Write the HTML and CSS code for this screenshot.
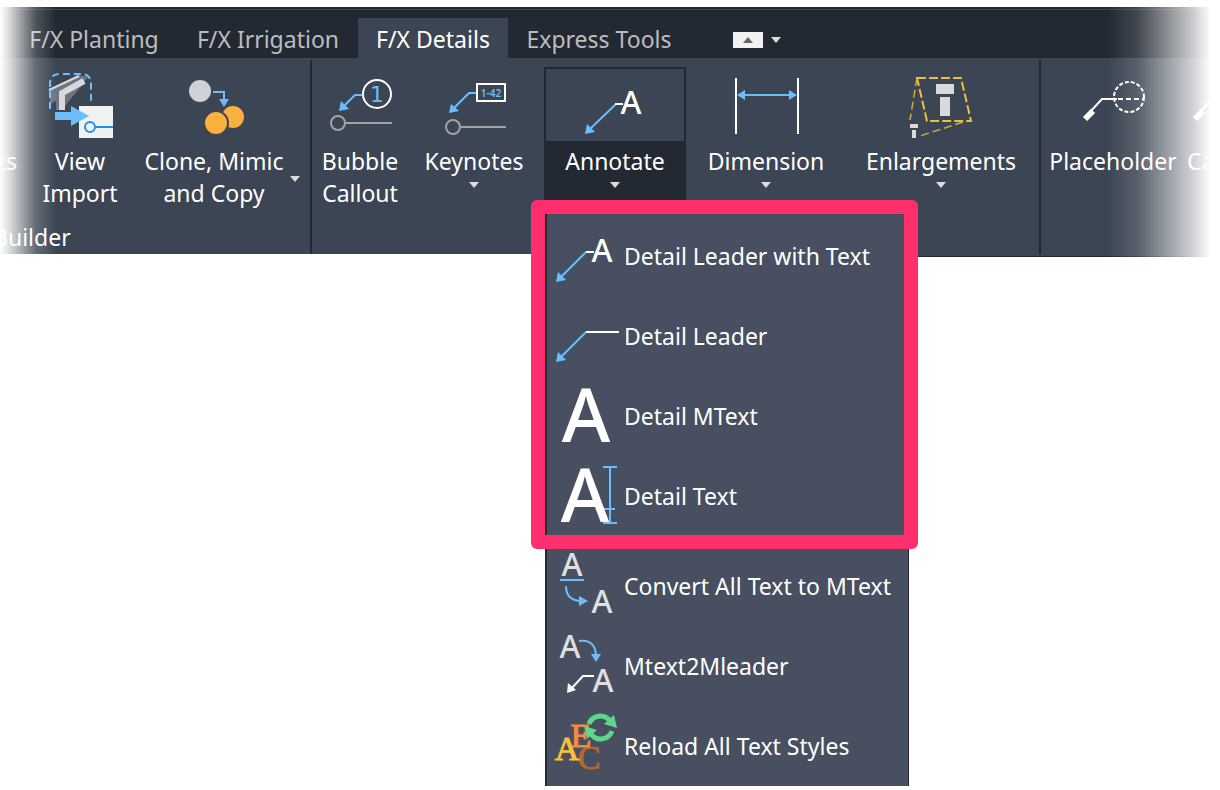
FILE: index.html
```html
<!DOCTYPE html>
<html lang="en">
<head>
  <meta charset="UTF-8" />
  <meta name="viewport" content="width=device-width, initial-scale=1" />
  <title>F/X Details</title>
  <link rel="stylesheet" href="styles.css">
</head>
<body>

  <header class="ribbon">
    <nav class="tabs">
      <a href="#planting" class="tab tab-planting">F/X Planting</a>
      <a href="#irrigation" class="tab tab-irrigation">F/X Irrigation</a>
      <a href="#details" class="tab tab-details active">F/X Details</a>
      <a href="#express" class="tab tab-express">Express Tools</a>
      <button class="minimize" aria-label="Minimize ribbon">
        <svg width="10" height="6"><path d="M0 6 L5 0 L10 6 Z" fill="#666" /></svg>
      </button>
      <button class="minimize-more" aria-label="Minimize options">
        <svg width="10" height="6"><path d="M0 0 H10 L5 6 Z" fill="#dcdcdc" /></svg>
      </button>
    </nav>

    <div class="panels">
      <!-- Builder -->
      <section class="panel panel-builder">
        <div class="tools">
          <button class="tool tool-cut"><span class="icon"></span><span class="label">cs</span></button>
          <button class="tool tool-view">
            <span class="icon">
              <svg width="64" height="64">
                <path d="M2 17 L30 3 L40 5 L14 38 H8 L2 32 Z" fill="#6d7584" />
                <path d="M2 32 L8 29 V38 H5 Z" fill="#3c4553" />
                <path d="M1 18 L31 4" stroke="#d9d9d9" stroke-width="2" />
                <path d="M36 9 L14 21 V38" stroke="#d9d9d9" stroke-width="6" fill="none" />
                <path d="M2 37 V12 Q2 2 12 2 H33 Q43 2 43 12 V30" stroke="#6cbdfb" stroke-width="2" stroke-dasharray="7 4" fill="none" />
                <rect x="31" y="34" width="34" height="32" fill="#f0f2f2" />
                <path d="M7 40 H23 V34 L41 44 L23 54 V48 H7 Z" fill="#6cbdfb" />
                <circle cx="42" cy="55" r="5" fill="#f0f2f2" stroke="#1e90ea" stroke-width="2" />
                <path d="M48 55 H65" stroke="#1e90ea" stroke-width="2" />
              </svg>
            </span>
            <span class="label">View<br>Import</span>
          </button>
          <button class="tool tool-clone">
            <span class="icon">
              <svg width="64" height="64">
                <circle cx="18" cy="19" r="11" fill="#cfd1d4" />
                <path d="M31 20 H42 V28" stroke="#6cbdfb" stroke-width="2" fill="none" />
                <path d="M37 27 H47 L42 35 Z" fill="#6cbdfb" />
                <circle cx="51" cy="45" r="11" fill="#fbb040" />
                <circle cx="34" cy="51" r="12" fill="#fbb040" stroke="#3c4553" stroke-width="2" />
              </svg>
            </span>
            <span class="label">Clone, Mimic<br>and Copy</span>
            <svg class="side-arrow" width="10" height="6"><path d="M0 0 H10 L5 6 Z" fill="#dcdcdc" /></svg>
          </button>
        </div>
        <h2 class="panel-title">Builder</h2>
      </section>

      <!-- Details, callouts -->
      <section class="panel">
        <div class="tools">
          <div class="separator"></div>
          <button class="tool tool-bubble">
            <span class="icon">
              <svg width="64" height="64">
                <path d="M34 23 H27 L15 35" stroke="#6cbdfb" stroke-width="2" fill="none" />
                <path d="M11 39 L13 29 L21 37 Z" fill="#6cbdfb" />
                <circle cx="49" cy="22" r="14" stroke="#fff" stroke-width="2" fill="none" />
                <text x="49" y="30" class="bubble-number">1</text>
                <circle cx="10" cy="51" r="7" stroke="#a3a3a3" stroke-width="2" fill="none" />
                <path d="M18 51 H64" stroke="#a3a3a3" stroke-width="2" />
              </svg>
            </span>
            <span class="label">Bubble<br>Callout</span>
          </button>
          <button class="tool tool-keynotes">
            <span class="icon">
              <svg width="64" height="64">
                <path d="M34 21 H27 L12 36" stroke="#6cbdfb" stroke-width="2" fill="none" />
                <path d="M7 41 L9 32 L17 39 Z" fill="#6cbdfb" />
                <rect x="35" y="12" width="28" height="17" stroke="#fff" stroke-width="2" fill="none" />
                <text x="49" y="25" class="key-number">1-42</text>
                <circle cx="11" cy="55" r="7" stroke="#a3a3a3" stroke-width="2" fill="none" />
                <path d="M19 55 H64" stroke="#a3a3a3" stroke-width="2" />
              </svg>
            </span>
            <span class="label">Keynotes</span>
            <svg class="arrow" width="10" height="6"><path d="M0 0 H10 L5 6 Z" fill="#dcdcdc" /></svg>
          </button>

          <div class="dropdown">
            <button class="tool tool-annotate open" id="annotateBtn" aria-expanded="true">
              <span class="icon">
                <svg width="64" height="64">
                  <path d="M7 57 L33 32" stroke="#6cbdfb" stroke-width="2" />
                  <path d="M2 62 L4 52 L12 60 Z" fill="#6cbdfb" />
                  <path d="M32 32 H40" stroke="#fff" stroke-width="2" />
                  <text x="48" y="42" class="glyph">A</text>
                </svg>
              </span>
              <span class="label">Annotate</span>
              <svg class="arrow" width="10" height="6"><path d="M0 0 H10 L5 6 Z" fill="#dcdcdc" /></svg>
            </button>

            <!-- Annotate menu -->
            <div class="menu" id="annotateMenu">
              <div class="menu-group highlighted">
                <button class="menu-item">
                  <svg width="64" height="72">
                    <path d="M7 57 L32 32" stroke="#6cbdfb" stroke-width="2" />
                    <path d="M2 62 L4 52 L12 60 Z" fill="#6cbdfb" />
                    <path d="M32 32 H40" stroke="#fff" stroke-width="2" />
                    <text x="48" y="42" class="glyph">A</text>
                  </svg>
                  Detail Leader with Text
                </button>
                <button class="menu-item">
                  <svg width="64" height="72">
                    <path d="M7 57 L32 32" stroke="#6cbdfb" stroke-width="2" />
                    <path d="M2 62 L4 52 L12 60 Z" fill="#6cbdfb" />
                    <path d="M32 32 H65" stroke="#fff" stroke-width="2" />
                  </svg>
                  Detail Leader
                </button>
                <button class="menu-item">
                  <svg width="64" height="72">
                    <text x="32" y="62" class="glyph big">A</text>
                  </svg>
                  Detail MText
                </button>
                <button class="menu-item">
                  <svg width="64" height="72">
                    <path d="M49 7 H63 M56 7 V63 M49 63 H63 M50 49 H61" stroke="#6cbdfb" stroke-width="2" />
                    <text x="31" y="62" class="glyph big">A</text>
                  </svg>
                  Detail Text
                </button>
              </div>
              <div class="menu-group">
                <button class="menu-item">
                  <svg width="64" height="72">
                    <text x="18" y="26" class="glyph soft">A</text>
                    <path d="M6 30 H30" stroke="#6cbdfb" stroke-width="2" />
                    <path d="M12 36 Q12 50 26 51" stroke="#6cbdfb" stroke-width="2" fill="none" />
                    <path d="M25 46 L34 51 L25 56 Z" fill="#6cbdfb" />
                    <text x="48" y="63" class="glyph soft">A</text>
                  </svg>
                  Convert All Text to MText
                </button>
                <button class="menu-item">
                  <svg width="64" height="72">
                    <text x="16" y="28" class="glyph soft">A</text>
                    <path d="M25 11 Q41 9 42 25" stroke="#6cbdfb" stroke-width="2" fill="none" />
                    <path d="M37 24 H47 L42 32 Z" fill="#6cbdfb" />
                    <path d="M40 46 H29 L17 59" stroke="#fff" stroke-width="2" fill="none" />
                    <path d="M13 63 L14 53 L22 60 Z" fill="#fff" />
                    <text x="49" y="62" class="glyph soft">A</text>
                  </svg>
                  Mtext2Mleader
                </button>
                <button class="menu-item">
                  <svg width="64" height="72">
                    <text x="35" y="59" class="serif-glyph brown">C</text>
                    <text x="27" y="37" class="serif-glyph orange">E</text>
                    <text x="13" y="50" class="serif-glyph yellow">A</text>
                    <path d="M35 14 A12 12 0 0 1 56 11" stroke="#5fd68b" stroke-width="5" fill="none" />
                    <path d="M63 18 L50 14 L60 5 Z" fill="#5fd68b" />
                    <path d="M58 21 A12 12 0 0 1 37 24" stroke="#5fd68b" stroke-width="5" fill="none" />
                    <path d="M30 16 L43 20 L33 29 Z" fill="#5fd68b" />
                  </svg>
                  Reload All Text Styles
                </button>
              </div>
            </div>
          </div>
        </div>
      </section>

      <!-- Details, dimensions and placeholders -->
      <section class="panel panel-last">
        <div class="tools">
          <button class="tool tool-dimension">
            <span class="icon">
              <svg width="64" height="64">
                <path d="M2 6 V62 M64 6 V62" stroke="#fff" stroke-width="2" />
                <path d="M8 23 H58" stroke="#6cbdfb" stroke-width="2" />
                <path d="M3 23 L11 18 V28 Z M63 23 L55 18 V28 Z" fill="#6cbdfb" />
              </svg>
            </span>
            <span class="label">Dimension</span>
            <svg class="arrow" width="10" height="6"><path d="M0 0 H10 L5 6 Z" fill="#dcdcdc" /></svg>
          </button>
          <button class="tool tool-enlargements">
            <span class="icon">
              <svg width="64" height="64">
                <path d="M8 6 H52 L62 49 H18 Z" stroke="#eebd3c" stroke-width="2" stroke-dasharray="9 3" fill="none" />
                <path d="M8 6 L1 48 M54 50 L11 64" stroke="#d0aa45" stroke-width="1.5" stroke-dasharray="8 4" />
                <path d="M27 12 H45 V22 H27 Z M31 25 H41 V44 H31 Z M1 52 H9 V56 H1 Z M3 58 H7 V66 H3 Z" fill="#d9d9d9" />
              </svg>
            </span>
            <span class="label">Enlargements</span>
            <svg class="arrow" width="10" height="6"><path d="M0 0 H10 L5 6 Z" fill="#dcdcdc" /></svg>
          </button>
          <div class="separator"></div>
          <button class="tool tool-placeholder">
            <span class="icon">
              <svg width="64" height="64">
                <circle cx="48" cy="25" r="15" stroke="#fff" stroke-width="2" stroke-dasharray="4 2" fill="none" />
                <path d="M37 27 H63" stroke="#fff" stroke-width="2" stroke-dasharray="5 3" />
                <path d="M36 27 H21 L9 40" stroke="#fff" stroke-width="2" fill="none" />
                <path d="M12 39 L4 47" stroke="#fff" stroke-width="6" />
              </svg>
            </span>
            <span class="label">Placeholder</span>
          </button>
          <button class="tool tool-callout">
            <span class="icon">
              <svg width="24" height="64">
                <path d="M24 24 L9 40" stroke="#fff" stroke-width="2" />
                <path d="M12 39 L4 47" stroke="#fff" stroke-width="6" />
              </svg>
            </span>
            <span class="label">Ca</span>
          </button>
        </div>
      </section>
    </div>
  </header>

  <script>
    const annotateBtn = document.getElementById('annotateBtn');
    const annotateMenu = document.getElementById('annotateMenu');

    annotateBtn.addEventListener('click', () => {
      const open = annotateBtn.classList.toggle('open');
      annotateMenu.hidden = !open;
      annotateBtn.setAttribute('aria-expanded', open);
    });
  </script>
</body>
</html>
```
FILE: styles.css
```css
* {
  box-sizing: border-box;
  margin: 0;
  padding: 0;
}

body {
  min-height: 100vh;
  padding-top: 7px;
  background: #fff;
  color: #fff;
  font-family: "Noto Sans", "Open Sans", sans-serif;
  font-size: 23px;
  line-height: 32px;
}

button {
  font: inherit;
  color: inherit;
  background: none;
  border: none;
  cursor: pointer;
}

svg {
  display: block;
  overflow: visible;
  flex-shrink: 0;
}

/* Ribbon */
.ribbon {
  position: relative;
}

/* Both ends fade out to the page */
.ribbon::before,
.ribbon::after {
  content: "";
  position: absolute;
  top: 0;
  bottom: 0;
  z-index: 1;
  pointer-events: none;
}

.ribbon::before {
  left: 0;
  width: 56px;
  background: linear-gradient(to right, #fff 0, rgba(255,255,255,0.85) 8px, rgba(255,255,255,0.2) 36px, rgba(255,255,255,0) 56px);
}

.ribbon::after {
  right: 0;
  width: 112px;
  background: linear-gradient(to right, rgba(255,255,255,0) 0, rgba(255,255,255,0.15) 30px, rgba(255,255,255,0.75) 84px, #fff 103px);
}

/* Tabs */
.tabs {
  display: flex;
  align-items: center;
  height: 51px;
  padding: 11px 0 0 10px;
  background: linear-gradient(#222933 2px, #3c4553 2px, #3c4553 3px, #222933 3px);
}

.tab {
  height: 40px;
  padding-top: 5px;
  text-align: center;
  color: #bdbdbd;
  text-decoration: none;
  white-space: nowrap;
}

.tab.active {
  background: #3c4553;
  color: #fff;
}

.tab-planting { width: 168px; }
.tab-irrigation { width: 180px; }
.tab-details { width: 150px; }
.tab-express { width: 182px; }

.minimize {
  display: flex;
  align-items: center;
  justify-content: center;
  width: 30px;
  height: 16px;
  margin-left: 43px;
  margin-top: 4px;
  background: #f2f2f2;
}

.minimize-more {
  margin-left: 8px;
  margin-top: 4px;
}

/* Panels */
.panels {
  display: flex;
  align-items: flex-start;
}

.panel {
  height: 196px;
  background: #3c4553;
}

.panel-builder {
  width: 310px;
  overflow: hidden;
}

.panel-last {
  flex: 1;
  height: 199px;
  border-bottom: 1px solid #222933;
}

.panel-title {
  margin: 4px 0 0 -7px;
  font-size: 23px;
  font-weight: 400;
}

.separator {
  width: 2px;
  height: 194px;
  margin-top: 2px;
  background: #222933;
}

.tools {
  display: flex;
  align-items: flex-start;
}

.panel-builder .tools {
  height: 159px;
}

/* Tool buttons */
.tool {
  position: relative;
  display: flex;
  flex-direction: column;
  align-items: center;
  height: 133px;
  margin-top: 9px;
  border: 2px solid transparent;
  white-space: nowrap;
}

.tool .icon {
  display: flex;
  flex-shrink: 0;
  justify-content: center;
  width: 100%;
  height: 72px;
  padding-top: 3px;
}

.tool .label {
  margin-top: 4px;
}

.tool .arrow {
  margin-top: 5px;
}

.side-arrow {
  position: absolute;
  right: -10px;
  top: 107px;
}

.tool.open {
  background: #222933;
  border-color: #222933;
}

.tool.open .icon {
  background: #3c4553;
}

.tool-cut { width: 19px; align-items: flex-end; }
.tool-view { width: 112px; margin-left: 5px; }
.tool-clone { width: 156px; }
.tool-bubble { width: 96px; }
.tool-keynotes { width: 132px; }
.tool-annotate { width: 142px; }
.tool-dimension { width: 160px; }
.tool-enlargements { width: 190px; margin-right: 3px; }
.tool-placeholder { width: 144px; }
.tool-callout { width: 35px; align-items: flex-start; }

/* Annotate menu */
.dropdown {
  position: relative;
  margin-left: 4px;
}

.menu {
  position: absolute;
  top: 142px;
  left: 1px;
  z-index: 2;
  width: 364px;
  padding-top: 16px;
  background: #474f61;
  border-left: 2px solid #222933;
  border-right: 1px solid #222933;
}

.menu[hidden] {
  display: none;
}

.menu-group {
  position: relative;
}

.menu-group + .menu-group {
  margin-top: 10px;
}

.highlighted::after {
  content: "";
  position: absolute;
  top: -16px;
  right: -10px;
  bottom: -13px;
  left: -16px;
  border: 14px solid #ff2e6c;
  border-radius: 6px;
  pointer-events: none;
}

.menu-item {
  display: flex;
  align-items: center;
  gap: 6px;
  width: 100%;
  height: 80px;
  padding-left: 7px;
  text-align: left;
  white-space: nowrap;
}

.menu-item:hover {
  background: #525b6f;
}

/* Letters in icons */
.glyph {
  font-size: 32px;
  font-weight: 500;
  text-anchor: middle;
  fill: #fff;
}

.glyph.big {
  font-size: 74px;
}

.glyph.soft {
  fill: #e0e0e0;
}

.bubble-number {
  font-family: "DejaVu Sans", sans-serif;
  font-size: 22px;
  text-anchor: middle;
  fill: #6cbdfb;
}

.key-number {
  font-size: 10px;
  font-weight: 600;
  text-anchor: middle;
  fill: #6cbdfb;
}

.serif-glyph {
  font-family: "Liberation Serif", serif;
  font-size: 34px;
  text-anchor: middle;
  stroke-width: 1px;
}

.yellow { fill: #fbbf3c; stroke: #fbbf3c; }
.orange { fill: #f58b3c; stroke: #f58b3c; }
.brown { fill: #b5672d; stroke: #b5672d; }
```
